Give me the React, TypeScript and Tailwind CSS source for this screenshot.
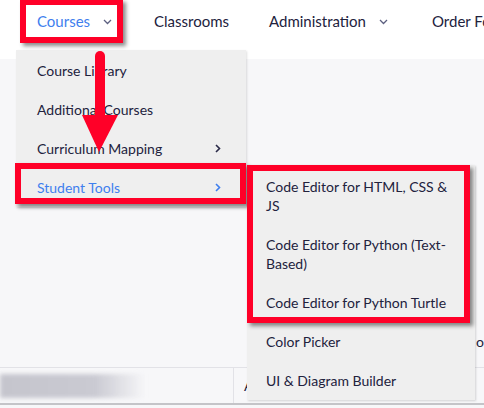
import React from "react";

const ink = "text-[#22223d]";

function ChevronDown() {
  return (
    <svg width="9" height="6" viewBox="0 0 9 6" className="mt-[2px] shrink-0">
      <path d="M1 1l3.5 3.5L8 1" fill="none" stroke="#5c6080" strokeWidth="1.3" />
    </svg>
  );
}

function ChevronRight({ color = "#2a2a48" }: { color?: string }) {
  return (
    <svg width="6" height="9" viewBox="0 0 6 9" className="shrink-0">
      <path d="M1 1l3.5 3.5L1 8" fill="none" stroke={color} strokeWidth="1.6" />
    </svg>
  );
}

const mainMenu = [
  { label: "Course Library" },
  { label: "Additional Courses" },
  { label: "Curriculum Mapping", sub: true },
  { label: "Student Tools", sub: true, active: true },
];

// line breaks as the menu wraps them
const tools = [
  ["Code Editor for HTML, CSS &", "JS"],
  ["Code Editor for Python (Text-", "Based)"],
  ["Code Editor for Python Turtle"],
  ["Color Picker"],
  ["UI & Diagram Builder"],
];

export default function App() {
  return (
    <div className="relative h-[408px] w-[484px] overflow-hidden bg-[#f7f7f9] font-['Lato',sans-serif] text-[15px]">
      {/* top nav */}
      <header className="h-[59px] bg-white">
        <nav className={`flex h-[42px] items-center whitespace-nowrap pl-[37px] ${ink}`}>
          <div className="flex w-[117px] shrink-0 items-center">
            <span className="w-[66px] shrink-0 text-[#3f7fee]">Courses</span>
            <ChevronDown />
          </div>
          <span className="w-[115px] shrink-0">Classrooms</span>
          <div className="flex w-[163px] shrink-0 items-center">
            <span className="w-[110px] shrink-0">Administration</span>
            <ChevronDown />
          </div>
          <span className="shrink-0">Order Fo</span>
        </nav>
      </header>

      {/* page body */}
      <div className="h-[308px]">
        <div className={`pl-[476px] pt-[273px] text-[14px] leading-[19px] ${ink}`}>o</div>
      </div>
      <div className="flex h-[36px] border-t border-[#e2e2e7]">
        <div className="flex w-[234px] items-center border-r border-[#e2e2e7]">
          <div className="h-[24px] w-[146px] bg-[linear-gradient(90deg,#c5c5cd_0%,#cacad2_65%,rgba(200,200,210,0)_100%)] blur-[2px]" />
        </div>
        <div className={`flex items-center pl-[10px] text-[14px] ${ink}`}>A</div>
      </div>
      <div className="h-[2px] bg-[#c4c4c8]" />

      {/* Courses dropdown */}
      <div className={`absolute left-[16px] top-[50px] w-[230px] bg-[#efefef] pt-[1px] text-[14px] leading-[19px] shadow-[1px_1px_2px_rgba(0,0,0,0.12)] ${ink}`}>
        {mainMenu.map((m) => (
          <div
            key={m.label}
            className={`flex h-[39px] items-center justify-between pl-[21px] pr-[25px] ${m.active ? "text-[#3f7fee]" : ""}`}
          >
            <span>{m.label}</span>
            {m.sub && <ChevronRight color={m.active ? "#3f7fee" : "#2a2a48"} />}
          </div>
        ))}
      </div>

      {/* Student Tools submenu */}
      <div className={`absolute left-[247px] top-[165px] w-[228px] bg-[#efefef] pt-[2px] text-[14px] leading-[19px] shadow-[1px_1px_2px_rgba(0,0,0,0.15)] ${ink}`}>
        {tools.map((lines) => (
          <div key={lines.join(" ")} className="whitespace-nowrap py-[10px] pl-[19px]">
            {lines.map((l) => (
              <div key={l}>{l}</div>
            ))}
          </div>
        ))}
      </div>

      {/* annotation boxes */}
      <div className="absolute left-[20px] top-[-1px] h-[44px] w-[103px] border-[6px] border-[#ff0028] shadow-[3px_3px_4px_rgba(0,0,0,0.45)]" />
      <div className="absolute left-[15px] top-[163px] h-[41px] w-[231px] border-[6px] border-[#ff0028] shadow-[3px_3px_4px_rgba(0,0,0,0.45)]" />
      <div className="absolute left-[247px] top-[165px] h-[158px] w-[223px] border-[6px] border-[#ff0028] shadow-[3px_3px_4px_rgba(0,0,0,0.45)]" />

      {/* arrow */}
      <svg className="absolute left-[80px] top-[48px]" width="40" height="106" viewBox="0 0 40 106">
        <path d="M20 8v62" stroke="#ff0028" strokeWidth="10" strokeLinecap="round" />
        <path d="M2 67h36L19 104z" fill="#ff0028" />
      </svg>
    </div>
  );
}
